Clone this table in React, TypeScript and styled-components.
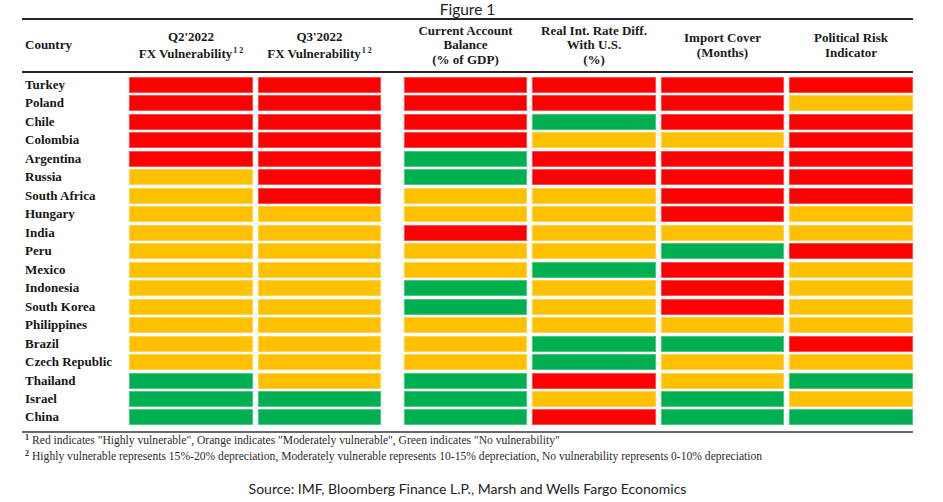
import React from 'react';
import styled, { createGlobalStyle } from 'styled-components';

const GlobalStyle = createGlobalStyle`
  html, body {
    margin: 0;
    padding: 0;
    background: #ffffff;
  }
`;

const Page = styled.div`
  width: 891px;
  margin-left: 22px;
  display: flex;
  flex-direction: column;
`;

const FigureTitle = styled.div`
  font-family: Lato, "Open Sans", sans-serif;
  font-size: 15.5px;
  line-height: 18px;
  color: #222;
  text-align: center;
`;

const Grid = styled.div`
  display: grid;
  grid-template-columns: 102px 124px 123px 13px 123px 124px 123px 124px;
  column-gap: 5px;
`;

const Header = styled(Grid)`
  border-top: 2px solid #262626;
  border-bottom: 2px solid #262626;
  height: 51px;
  align-items: center;
  font-family: "Liberation Serif", "Times New Roman", serif;
  font-weight: bold;
  font-size: 13px;
  color: #1a1a1a;
`;

const HeadCell = styled.div<{ $lh?: number; $left?: boolean }>`
  text-align: ${p => (p.$left ? 'left' : 'center')};
  padding-left: ${p => (p.$left ? '3px' : '0')};
  line-height: ${p => p.$lh ?? 14.5}px;
  white-space: nowrap;
`;

const Sup = styled.sup`
  font-size: 8px;
  line-height: 0;
  vertical-align: 5px;
  margin-left: 1px;
`;

const Body = styled(Grid)`
  padding-top: 4px;
  padding-bottom: 6px;
  grid-auto-rows: 16px;
  row-gap: 2.48px;
  border-bottom: 2px solid #6a6a6a;
`;

const CountryName = styled.div`
  font-family: "Liberation Serif", "Times New Roman", serif;
  font-weight: bold;
  font-size: 13px;
  line-height: 16px;
  color: #161616;
  padding-left: 3px;
  white-space: nowrap;
`;

const colours: Record<string, string> = {
  R: '#ff0000',
  O: '#ffc000',
  G: '#00b050',
};

const Cell = styled.div<{ $c: string }>`
  background: ${p => colours[p.$c]};
  box-shadow: inset 0 0 0 1px rgba(255, 255, 255, 0.3);
`;

const Spacer = styled.div``;

const Notes = styled.div`
  font-family: "Liberation Serif", "Times New Roman", serif;
  font-size: 11.6px;
  line-height: 16px;
  color: #2a2a2a;
  padding-left: 3px;
`;

const NoteSup = styled.sup`
  font-size: 8px;
  line-height: 0;
  vertical-align: 4px;
  margin-right: 3px;
  font-weight: bold;
`;

const Source = styled.div`
  margin-top: 14px;
  font-family: Lato, "Open Sans", sans-serif;
  font-size: 14px;
  line-height: 20px;
  color: #222;
  text-align: center;
`;

const rows: [string, string][] = [
  ['Turkey', 'RRRRRR'],
  ['Poland', 'RRRRRO'],
  ['Chile', 'RRRGRR'],
  ['Colombia', 'RRROOR'],
  ['Argentina', 'RRGRRR'],
  ['Russia', 'ORGRRR'],
  ['South Africa', 'OROORR'],
  ['Hungary', 'OOOORO'],
  ['India', 'OOROOO'],
  ['Peru', 'OOOOGR'],
  ['Mexico', 'OOOGRO'],
  ['Indonesia', 'OOGORO'],
  ['South Korea', 'OOGORO'],
  ['Philippines', 'OOOOOO'],
  ['Brazil', 'OOOGGR'],
  ['Czech Republic', 'OOOGOO'],
  ['Thailand', 'GOGROG'],
  ['Israel', 'GGGOGO'],
  ['China', 'GGGRGG'],
];

const App: React.FC = () => {
  return (
    <Page>
      <GlobalStyle />
      <FigureTitle>Figure 1</FigureTitle>
      <Header>
        <HeadCell $left>Country</HeadCell>
        <HeadCell $lh={16.5}>
          Q2'2022
          <br />
          FX Vulnerability<Sup>1 2</Sup>
        </HeadCell>
        <HeadCell $lh={16.5}>
          Q3'2022
          <br />
          FX Vulnerability<Sup>1 2</Sup>
        </HeadCell>
        <Spacer />
        <HeadCell>
          Current Account
          <br />
          Balance
          <br />
          (% of GDP)
        </HeadCell>
        <HeadCell>
          Real Int. Rate Diff.
          <br />
          With U.S.
          <br />
          (%)
        </HeadCell>
        <HeadCell>
          Import Cover
          <br />
          (Months)
        </HeadCell>
        <HeadCell>
          Political Risk
          <br />
          Indicator
        </HeadCell>
      </Header>
      <Body>
        {rows.map(([name, codes]) => (
          <React.Fragment key={name}>
            <CountryName>{name}</CountryName>
            <Cell $c={codes[0]} />
            <Cell $c={codes[1]} />
            <Spacer />
            <Cell $c={codes[2]} />
            <Cell $c={codes[3]} />
            <Cell $c={codes[4]} />
            <Cell $c={codes[5]} />
          </React.Fragment>
        ))}
      </Body>
      <Notes>
        <div>
          <NoteSup>1</NoteSup>Red indicates "Highly vulnerable", Orange indicates "Moderately vulnerable", Green
          indicates "No vulnerability"
        </div>
        <div>
          <NoteSup>2</NoteSup>Highly vulnerable represents 15%-20% depreciation, Moderately vulnerable represents
          10-15% depreciation, No vulnerability represents 0-10% depreciation
        </div>
      </Notes>
      <Source>Source: IMF, Bloomberg Finance L.P., Marsh and Wells Fargo Economics</Source>
    </Page>
  );
};

export default App;
